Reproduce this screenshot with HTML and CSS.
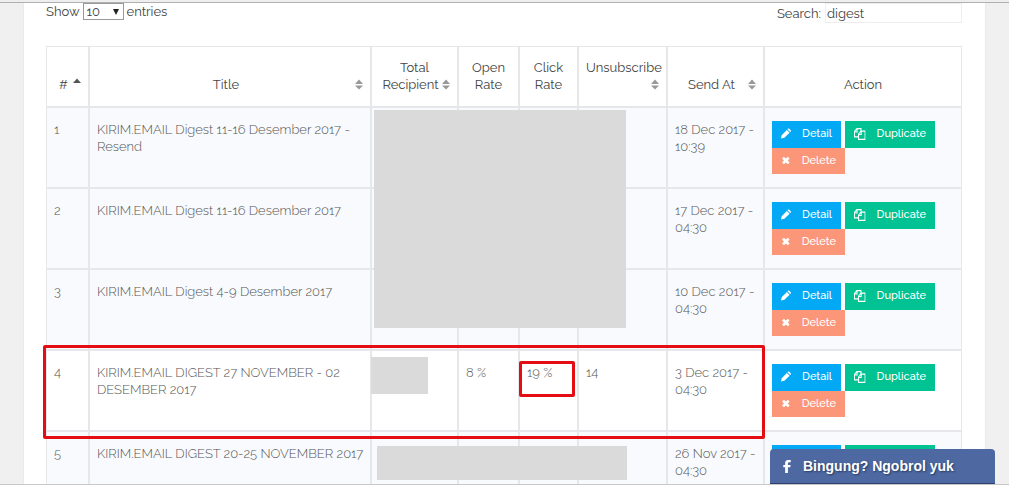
FILE: index.html
```
<!DOCTYPE html>
<html lang="id">
<head>
<meta charset="utf-8">
<title>Email Digest</title>
<link rel="stylesheet" href="styles.css">
</head>
<body>
<svg class="sprite" aria-hidden="true">
  <symbol id="sort" viewBox="0 0 9 11"><path d="M0 5 4.500 0 9 5zM0 6.500 4.500 11 9 6.500z"/></symbol>
  <symbol id="asc" viewBox="0 0 9 11"><path d="M0 5 4.500 0 9 5z"/></symbol>
  <symbol id="pencil" viewBox="0 0 12 12"><path d="M0 12l.8-4L7 1.700l3.300 3.300L4 11.200zM7.700 1 8.300.4q.8-.8 1.600 0l1.700 1.700q.8.8 0 1.600l-.6.6z"/></symbol>
  <symbol id="copy" viewBox="0 0 14 14"><path d="M5.500 10.500h-5V4l3-3.500h5v3M.5 4.500h3.200V.5M5.500 7l3-3.500h5v10h-8zM5.500 7.500h3.200v-4" fill="none" stroke="currentColor" stroke-width="1.300"/></symbol>
  <symbol id="times" viewBox="0 0 10 10"><path d="M2.500 0 5 2.500 7.500 0 10 2.500 7.500 5 10 7.500 7.500 10 5 7.500 2.500 10 0 7.500 2.500 5 0 2.500z"/></symbol>
</svg>
<main class="page">
  <section class="card">
    <div class="toolbar">
      <label>Show <select class="length"><option>10</option><option>25</option></select> entries</label>
      <label class="search">Search: <input class="search-box" type="text" value="digest"></label>
    </div>
    <div class="table-wrap">
      <table class="digests">
        <colgroup><col class="c-no"><col><col class="c-total"><col class="c-open"><col class="c-click"><col class="c-unsub"><col class="c-send"><col class="c-action"></colgroup>
        <thead>
          <tr>
            <th><svg class="sort asc"><use href="#asc"/></svg>#</th>
            <th><svg class="sort"><use href="#sort"/></svg>Title</th>
            <th>Total<br><svg class="sort"><use href="#sort"/></svg>Recipient</th>
            <th>Open Rate</th>
            <th>Click Rate</th>
            <th>Unsubscribe<br><svg class="sort"><use href="#sort"/></svg>&nbsp;</th>
            <th><svg class="sort"><use href="#sort"/></svg>Send At</th>
            <th>Action</th>
          </tr>
        </thead>
        <tbody>
          <tr class="tinted"><td>1</td><td>KIRIM.EMAIL Digest 11-16 Desember 2017 - Resend</td><td></td><td></td><td></td><td></td><td>18 Dec 2017 - 10:39</td>
            <td><div class="actions"><button class="btn detail"><svg><use href="#pencil"/></svg>Detail</button><button class="btn duplicate"><svg><use href="#copy"/></svg>Duplicate</button><button class="btn delete"><svg><use href="#times"/></svg>Delete</button></div></td></tr>
          <tr class="tinted"><td>2</td><td>KIRIM.EMAIL Digest 11-16 Desember 2017</td><td></td><td></td><td></td><td></td><td>17 Dec 2017 - 04:30</td>
            <td><div class="actions"><button class="btn detail"><svg><use href="#pencil"/></svg>Detail</button><button class="btn duplicate"><svg><use href="#copy"/></svg>Duplicate</button><button class="btn delete"><svg><use href="#times"/></svg>Delete</button></div></td></tr>
          <tr class="tinted"><td>3</td><td>KIRIM.EMAIL Digest 4-9 Desember 2017</td><td></td><td></td><td></td><td></td><td>10 Dec 2017 - 04:30</td>
            <td><div class="actions"><button class="btn detail"><svg><use href="#pencil"/></svg>Detail</button><button class="btn duplicate"><svg><use href="#copy"/></svg>Duplicate</button><button class="btn delete"><svg><use href="#times"/></svg>Delete</button></div></td></tr>
          <tr><td>4</td><td>KIRIM.EMAIL DIGEST 27 NOVEMBER - 02 DESEMBER 2017</td><td></td><td>8 %</td><td>19 %</td><td>14</td><td>3 Dec 2017 - 04:30</td>
            <td><div class="actions"><button class="btn detail"><svg><use href="#pencil"/></svg>Detail</button><button class="btn duplicate"><svg><use href="#copy"/></svg>Duplicate</button><button class="btn delete"><svg><use href="#times"/></svg>Delete</button></div></td></tr>
          <tr class="tinted"><td>5</td><td>KIRIM.EMAIL DIGEST 20-25 NOVEMBER 2017</td><td></td><td></td><td></td><td></td><td>26 Nov 2017 - 04:30</td>
            <td><div class="actions"><button class="btn detail" aria-label="Detail"></button><button class="btn duplicate" aria-label="Duplicate"></button></div></td></tr>
        </tbody>
      </table>
      <div class="mask mask-top"></div>
      <div class="mask mask-total"></div>
      <div class="mask mask-bottom"></div>
      <div class="mark mark-row"></div>
      <div class="mark mark-click"></div>
    </div>
  </section>
</main>
<button class="chat"><svg viewBox="0 0 8 14"><path d="M2 14V7.800H0V5.300h2V3.500Q2 0 5.400 0H8v2.400H6.200Q5 2.400 5 3.600v1.700h2.900l-.4 2.500H5V14z"/></svg>Bingung? Ngobrol yuk</button>
</body>
</html>
```
FILE: styles.css
```
* { box-sizing: border-box; }
body {
  margin: 0;
  background: #f0f0f0;
  color: #555;
  font: 300 13px/17px Raleway, Lato, sans-serif;
}
.sprite { display: none; }
.page {
  height: 100vh;
  overflow: hidden;
  padding: 0 24px;
  border-top: 3px solid #b4b4b4;
  border-bottom: 1px solid #c8c8c8;
  border-image: linear-gradient(#eee 0 2px, #b0b0b0 2px 3px, #c8c8c8 3px) 3 0 1 / 3px 0 1px;
}
.card {
  min-height: 100%;
  padding: 0 23px 24px 22px;
  background: #fff;
  box-shadow: 0 0 2px #ddd;
}
.toolbar {
  display: flex;
  justify-content: space-between;
  height: 43px;
  color: #444;
  font-weight: 400;
}
.toolbar label {
  display: flex;
  align-items: center;
  gap: 3px;
  height: 17px;
}
.length {
  appearance: none;
  width: 41px;
  height: 17px;
  padding: 0 3px;
  border: 1px solid #999;
  border-radius: 0;
  background: #fff url("data:image/svg+xml,%3Csvg xmlns='http://www.w3.org/2000/svg' viewBox='0 0 6 6'%3E%3Cpath d='M0 0h6L3 6z' fill='%23222'/%3E%3C/svg%3E") no-repeat right 4px center / 6px 6px;
  color: #444;
  font: inherit;
  line-height: 14px;
}
.toolbar .search { height: 20px; gap: 4px; }
.search-box {
  width: 137px;
  height: 20px;
  padding: 0 1px;
  border: 1px solid #eee;
  color: #444;
  font: inherit;
}
.table-wrap { position: relative; }
.digests {
  width: 100%;
  table-layout: fixed;
  border: 1px solid #e5e7ea;
  border-width: 1px 0 0 1px;
  border-spacing: 0;
}
.c-no { width: 43px; }
.c-total { width: 87px; }
.c-open { width: 61px; }
.c-click { width: 59px; }
.c-unsub { width: 89px; }
.c-send { width: 97px; }
.c-action { width: 197px; }
.digests th, .digests td {
  border: 0 solid #e5e7ea;
  border-width: 0 2px 2px 0;
}
.digests th:last-child, .digests td:last-child { border-right-width: 1px; }
.digests th {
  height: 61px;
  padding: 0 7px 13px;
  color: #444;
  font-weight: 400;
  vertical-align: bottom;
}
.digests td {
  height: 81px;
  padding: 13px 2px 0 7px;
  vertical-align: top;
}
.tinted { background: #f8fafd; }
.sort {
  float: right;
  width: 8px;
  height: 11px;
  margin-top: 3px;
  fill: #999;
}
.sort.asc {
  margin-top: 2px;
  fill: #555;
}
.actions {
  display: flex;
  flex-wrap: wrap;
  column-gap: 4px;
}
.btn {
  display: flex;
  align-items: center;
  height: 27px;
  padding: 0 9px 2px;
  border: 0;
  color: #fff;
  font: 500 11px/17px Raleway, Lato, sans-serif;
}
.btn svg {
  width: 11px;
  height: 11px;
  margin-right: 11px;
  fill: currentColor;
}
.detail { width: 69px; background: #03a9f4; }
.duplicate { width: 90px; background: #00c292; }
.duplicate svg { width: 12px; height: 12px; margin-right: 11px; }
.delete { width: 73px; height: 26px; background: #fb9678; }
.delete svg { width: 9px; height: 9px; margin: 0 12px 0 1px; }
.mask, .mark { position: absolute; }
.mask { background: #dadada; }
.mask-top { top: 64px; right: 336px; width: 252px; height: 218px; }
.mask-total { top: 311px; right: 534px; width: 57px; height: 37px; }
.mask-bottom { top: 400px; right: 335px; width: 250px; height: 34px; }
.mark {
  border: 3px solid #e30d13;
  border-radius: 2px;
}
.mark-row { top: 299px; right: 197px; left: -3px; height: 94px; }
.mark-click { top: 315px; right: 387px; width: 56px; height: 36px; }
.chat {
  position: fixed;
  right: 14px;
  bottom: 1px;
  display: flex;
  align-items: center;
  gap: 12px;
  width: 225px;
  height: 35px;
  padding: 0 13px;
  border: 0;
  border-bottom: 1px solid #2b3f70;
  border-radius: 4px 4px 0 0;
  background: #4e69a2;
  color: #fff;
  font: bold 14px/17px "Liberation Sans", Arial, sans-serif;
  text-shadow: 1px 1px 2px #26385f;
}
.chat svg { width: 8px; height: 13px; fill: #fff; }
```
